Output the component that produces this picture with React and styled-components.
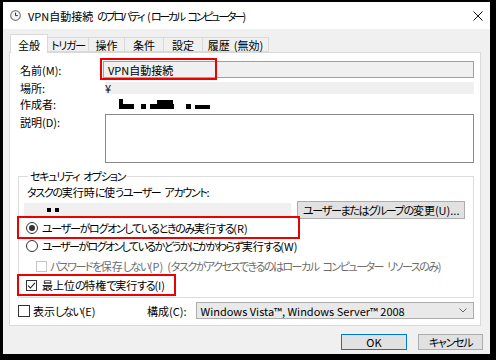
import React from "react";
import styled, { createGlobalStyle } from "styled-components";

const Global = createGlobalStyle`
  html, body { margin: 0; padding: 0; background: #000; }
  body { width: 496px; height: 360px; overflow: hidden; }
  #root { padding: 2px 6px 6px 3px; }
`;

const FONT = `"Noto Sans CJK JP", "Noto Sans", sans-serif`;

const Kana = styled.span`
  letter-spacing: ${(p) => p.$ls ?? -1.3}px;
`;

const Gap = styled.span`
  display: inline-block;
  width: 4px;
`;

const SPLIT_RE = /([\u3040-\u30ff\uff70]+| )/;
const KANA_TEST = /^[\u3040-\u30ff\uff70]+$/;

function T({ children, ls }) {
  const parts = String(children).split(SPLIT_RE).filter((s) => s !== "");
  return (
    <>
      {parts.map((s, i) => {
        if (s === " ") return <Gap key={i}> </Gap>;
        if (KANA_TEST.test(s))
          return (
            <Kana key={i} $ls={ls}>
              {s}
            </Kana>
          );
        return <React.Fragment key={i}>{s}</React.Fragment>;
      })}
    </>
  );
}

const Window = styled.div`
  width: 487px;
  height: 352px;
  background: #f0f0f0;
  display: flex;
  flex-direction: column;
  font-family: ${FONT};
  font-size: 11px;
  font-feature-settings: "palt";
  color: #000;
  box-sizing: border-box;
`;

const TitleBar = styled.div`
  height: 27px;
  flex: 0 0 27px;
  background: #fff;
  display: flex;
  align-items: center;
  padding: 0 7px;
`;

const TitleText = styled.span`
  margin-left: 7px;
  font-size: 11px;
  flex: 1;
  white-space: nowrap;
`;

const Body = styled.div`
  flex: 1;
  display: flex;
  flex-direction: column;
  padding: 6px 9px 0 6px;
`;

const TabRow = styled.div`
  display: flex;
  align-items: flex-end;
  height: 17px;
  padding-left: 1px;
  position: relative;
  z-index: 1;
`;

const Tab = styled.div`
  box-sizing: border-box;
  width: ${(p) => p.$w}px;
  height: ${(p) => (p.$active ? 19 : 15)}px;
  margin-bottom: ${(p) => (p.$active ? -1 : 0)}px;
  display: flex;
  justify-content: center;
  align-items: ${(p) => (p.$active ? "flex-start" : "center")};
  padding-top: ${(p) => (p.$active ? 2 : 0)}px;
  background: ${(p) => (p.$active ? "#fff" : "#f0f0f0")};
  border: 1px solid #d9d9d9;
  border-bottom: ${(p) => (p.$active ? "none" : "1px solid #d9d9d9")};
  margin-left: ${(p) => (p.$first ? 0 : -1)}px;
  white-space: nowrap;
`;

const Panel = styled.div`
  position: relative;
  box-sizing: border-box;
  height: 274px;
  background: #fff;
  border: 1px solid #d9d9d9;
  padding: 8px 6px 0 8px;
  display: flex;
  flex-direction: column;
`;

const InfoGrid = styled.div`
  display: grid;
  grid-template-columns: 83px 1fr;
  grid-template-rows: 17px 12px 12px 49px;
  row-gap: 4px;
  padding-left: 2px;
`;

const Label = styled.div`
  display: flex;
  align-items: ${(p) => (p.$top ? "flex-start" : "center")};
  line-height: 16px;
  white-space: nowrap;
`;

const ReadField = styled.div`
  box-sizing: border-box;
  border: 1px solid #a0a0a0;
  background: #f0f0f0;
  display: flex;
  align-items: center;
  padding-left: 4px;
`;

const Band = styled.div`
  margin-left: 2px;
  background: #f0f0f0;
  display: flex;
  align-items: center;
  line-height: 12px;
`;

const Plain = styled.div`
  margin-left: 2px;
  padding-left: ${(p) => p.$pl || 0}px;
  display: flex;
  align-items: center;
`;

const TextArea = styled.div`
  margin-left: 2px;
  box-sizing: border-box;
  border: 1px solid #8a8a8a;
  background: #fff;
`;

const Group = styled.fieldset`
  margin: 6px 0 0 0;
  padding: 2px 8px 3px 5px;
  border: 1px solid #dcdcdc;
  min-width: 0;
  display: flex;
  flex-direction: column;
`;

const Legend = styled.legend`
  margin-left: 4px;
  padding: 0 2px;
  line-height: 14px;
  white-space: nowrap;
`;

const Line = styled.div`
  display: flex;
  align-items: center;
  height: ${(p) => p.$h || 16}px;
  margin-top: ${(p) => p.$mt || 0}px;
  padding-left: ${(p) => p.$pl || 0}px;
  white-space: nowrap;
  color: ${(p) => (p.$disabled ? "#6d6d6d" : "#000")};
`;

const LineText = styled.span`
  white-space: nowrap;
`;

const AccountRow = styled.div`
  display: flex;
  align-items: center;
  height: 18px;
  margin-top: 2px;
`;

const AccountField = styled.div`
  width: 268px;
  height: 15px;
  background: #f0f0f0;
  display: flex;
  align-items: center;
  gap: 4px;
  padding-left: 23px;
  box-sizing: border-box;
`;

const Blot = styled.span`
  display: inline-block;
  width: ${(p) => p.$w}px;
  height: ${(p) => p.$h}px;
  background: #000;
`;

const Button = styled.div`
  box-sizing: border-box;
  width: ${(p) => p.$w}px;
  height: ${(p) => p.$h || 16}px;
  background: #e1e1e1;
  border: 1px solid ${(p) => (p.$default ? "#0078d7" : "#adadad")};
  display: flex;
  align-items: center;
  justify-content: center;
  white-space: nowrap;
  margin-left: ${(p) => p.$ml || 0}px;
`;

const Radio = styled.span`
  box-sizing: border-box;
  width: 12px;
  height: 12px;
  border-radius: 50%;
  border: 1px solid #333;
  display: inline-flex;
  align-items: center;
  justify-content: center;
  margin-right: 4px;
  flex: 0 0 auto;
  &::after {
    content: "";
    width: 6px;
    height: 6px;
    border-radius: 50%;
    background: ${(p) => (p.$on ? "#333" : "transparent")};
  }
`;

const Box = styled.span`
  box-sizing: border-box;
  width: ${(p) => p.$s || 11}px;
  height: ${(p) => p.$s || 11}px;
  border: 1px solid ${(p) => (p.$disabled ? "#c6c6c6" : "#333")};
  background: #fff;
  margin-right: ${(p) => p.$mr || 4}px;
  flex: 0 0 auto;
  display: inline-flex;
  align-items: center;
  justify-content: center;
`;

const BottomRow = styled.div`
  display: flex;
  align-items: center;
  height: 17px;
  margin-top: 4px;
`;

const ShowCheck = styled.div`
  flex: 0 0 129px;
  display: flex;
  align-items: center;
  white-space: nowrap;
`;

const Select = styled.div`
  flex: 1;
  margin-left: 9px;
  height: 17px;
  box-sizing: border-box;
  background: #e9e9e9;
  border: 1px solid #acacac;
  display: flex;
  align-items: center;
  padding: 0 6px 0 4px;
  white-space: nowrap;
`;

const SelectText = styled.span`
  flex: 1;
`;

const ButtonRow = styled.div`
  display: flex;
  justify-content: flex-end;
  margin-top: 8px;
  margin-right: -2px;
`;

const Mark = styled.div`
  position: absolute;
  left: ${(p) => p.$x}px;
  top: ${(p) => p.$y}px;
  width: ${(p) => p.$w}px;
  height: ${(p) => p.$h}px;
  border: 2px solid #ee0000;
  box-sizing: border-box;
  pointer-events: none;
`;

const ClockIcon = () => (
  <svg width="11" height="11" viewBox="0 0 11 11">
    <circle cx="5.5" cy="5.5" r="4.8" fill="#f6f6f6" stroke="#7c7c7c" strokeWidth="1.2" />
    <path d="M5.5 2.6 V5.6 H7.8" fill="none" stroke="#333" strokeWidth="1" />
  </svg>
);

const CloseIcon = () => (
  <svg width="10" height="10" viewBox="0 0 10 10">
    <path d="M0.5 0.5 L9.5 9.5 M9.5 0.5 L0.5 9.5" stroke="#111" strokeWidth="1" />
  </svg>
);

const Check = () => (
  <svg width="9" height="9" viewBox="0 0 9 9">
    <path d="M1 4.6 L3.4 7 L8 1.8" fill="none" stroke="#222" strokeWidth="1.1" />
  </svg>
);

const Chevron = () => (
  <svg width="8" height="5" viewBox="0 0 8 5">
    <path d="M0.5 0.5 L4 4 L7.5 0.5" fill="none" stroke="#666" strokeWidth="1" />
  </svg>
);

const AuthorRedaction = () => (
  <svg width="92" height="10" viewBox="0 0 92 10">
    <rect x="0" y="0" width="4" height="10" fill="#000" />
    <rect x="0" y="5" width="15" height="5" fill="#000" />
    <rect x="22" y="5" width="5" height="5" fill="#000" />
    <rect x="31" y="5" width="24" height="5" fill="#000" />
    <rect x="38" y="1" width="16" height="5" fill="#000" />
    <rect x="67" y="5" width="5" height="5" fill="#000" />
    <rect x="76" y="6" width="15" height="4" fill="#000" />
  </svg>
);

const tabs = [
  { t: "全般", w: 38 },
  { t: "トリガー", w: 42 },
  { t: "操作", w: 37 },
  { t: "条件", w: 40 },
  { t: "設定", w: 40 },
  { t: "履歴 (無効)", w: 67 },
];

export default function App() {
  return (
    <>
      <Global />
      <Window>
        <TitleBar>
          <ClockIcon />
          <TitleText>
            <T ls={-2.3}>VPN自動接続 のプロパティ (ローカル コンピューター)</T>
          </TitleText>
          <CloseIcon />
        </TitleBar>
        <Body>
          <TabRow>
            {tabs.map((tb, i) => (
              <Tab key={tb.t} $active={i === 0} $first={i === 0} $w={tb.w}>
                <T>{tb.t}</T>
              </Tab>
            ))}
          </TabRow>
          <Panel>
            <InfoGrid>
              <Label>名前(M):</Label>
              <ReadField>VPN自動接続</ReadField>
              <Label>場所:</Label>
              <Band>¥</Band>
              <Label>作成者:</Label>
              <Plain $pl={14}>
                <AuthorRedaction />
              </Plain>
              <Label $top>説明(D):</Label>
              <TextArea />
            </InfoGrid>

            <Group>
              <Legend>
                <T>セキュリティ オプション</T>
              </Legend>
              <Line $h={14} $pl={3}>
                <LineText>
                  <T>タスクの実行時に使うユーザー アカウント:</T>
                </LineText>
              </Line>
              <AccountRow>
                <AccountField>
                  <Blot $w={4} $h={4} />
                  <Blot $w={4} $h={4} />
                </AccountField>
                <Button $w={168} $h={18} $ml={6}>
                  <LineText>
                    <T>ユーザーまたはグループの変更(U)...</T>
                  </LineText>
                </Button>
              </AccountRow>
              <Line $h={18} $pl={2}>
                <Radio $on />
                <LineText>
                  <T>ユーザーがログオンしているときのみ実行する(R)</T>
                </LineText>
              </Line>
              <Line $h={18} $pl={2}>
                <Radio />
                <LineText>
                  <T ls={-1.6}>ユーザーがログオンしているかどうかにかかわらず実行する(W)</T>
                </LineText>
              </Line>
              <Line $h={18} $mt={2} $pl={12} $disabled>
                <Box $disabled $mr={3} />
                <LineText>
                  <T ls={-1.5}>パスワードを保存しない(P) (タスクがアクセスできるのはローカル コンピューター リソースのみ)</T>
                </LineText>
              </Line>
              <Line $h={18} $mt={1} $pl={2}>
                <Box $mr={5}>
                  <Check />
                </Box>
                <LineText>
                  <T>最上位の特権で実行する(I)</T>
                </LineText>
              </Line>
            </Group>

            <BottomRow>
              <ShowCheck>
                <Box $s={12} $mr={3} />
                <LineText>
                  <T>表示しない(E)</T>
                </LineText>
              </ShowCheck>
              <span>構成(C):</span>
              <Select>
                <SelectText>Windows Vista™, Windows Server™ 2008</SelectText>
                <Chevron />
              </Select>
            </BottomRow>

            <Mark $x={90} $y={5} $w={117} $h={22} />
            <Mark $x={7} $y={163} $w={283} $h={23} />
            <Mark $x={7} $y={221} $w={159} $h={22} />
          </Panel>
          <ButtonRow>
            <Button $w={66} $default>OK</Button>
            <Button $w={65} $ml={11}>
              <T>キャンセル</T>
            </Button>
          </ButtonRow>
        </Body>
      </Window>
    </>
  );
}
